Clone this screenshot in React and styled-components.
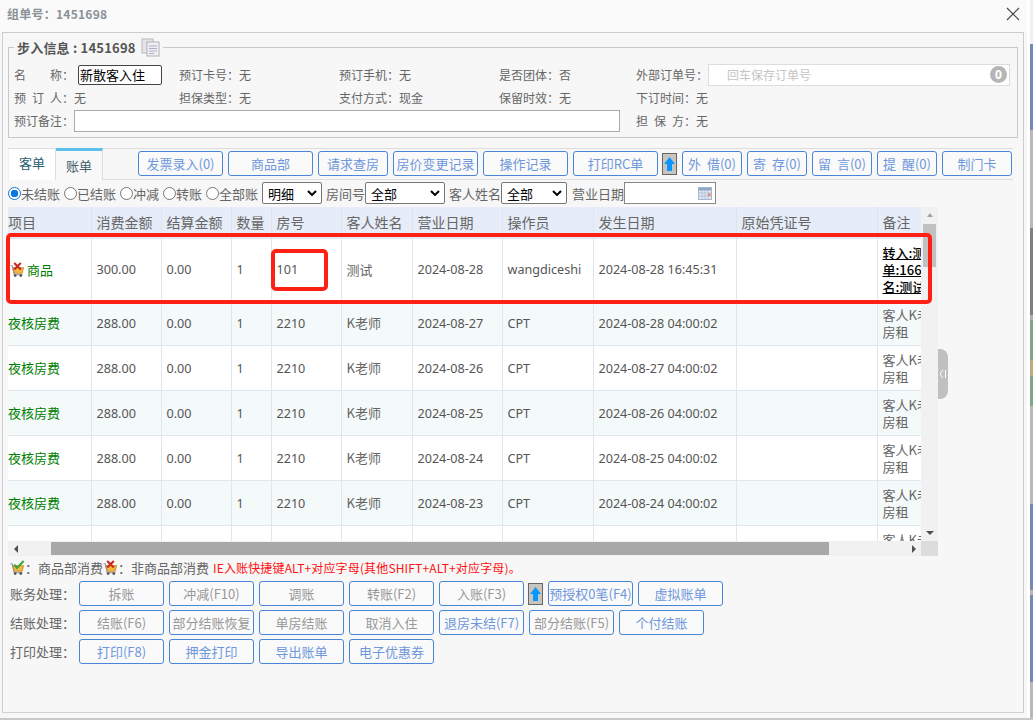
import React from 'react';
import styled, { createGlobalStyle } from 'styled-components';

const CJK = `"Noto Sans CJK SC", "Noto Sans", sans-serif`;

const Global = createGlobalStyle`
    html, body { margin: 0; padding: 0; background: #f7f7f7; }
    * { box-sizing: border-box; }
`

const Page = styled.div`
    position: relative;
    width: 1033px;
    height: 720px;
    overflow: hidden;
    background: #f7f7f7;
    font-family: ${CJK};
    color: #666;
`

const TitleBar = styled.div`
    display: flex;
    align-items: center;
    justify-content: space-between;
    height: 32px;
    padding: 0 13px 5px 7px;
    background: #fafafa;
`

const Title = styled.div`
    font-size: 12px;
    font-weight: 700;
    letter-spacing: .25px;
    color: #8a9196;
`

const CloseBtn = styled.button`
    display: flex;
    padding: 0;
    border: 0;
    background: none;
`

const Frame = styled.div`
    width: 1022px;
    height: 681px;
    margin-left: 2px;
    padding: 0 5px;
    border: 1px solid #ccc;
    border-bottom-color: #d0d0d0;
`

const Info = styled.fieldset`
    width: 1010px;
    height: 99px;
    margin: 6px 0 0;
    padding: 0 5px;
    border: 1px solid #c8c8c8;
    min-inline-size: 0;
`

const InfoLegend = styled.legend`
    display: flex;
    align-items: center;
    gap: 5px;
    padding: 0 3px;
    height: 16px;
    font-size: 13px;
    font-weight: 700;
    letter-spacing: .2px;
    color: #555;
`

const InfoRows = styled.div`
    padding-top: 8px;
`

const InfoRow = styled.div`
    display: grid;
    grid-template-columns: 165px 160px 160px 137px 1fr;
    align-items: center;
    height: 23px;
    font-size: 12px;
    color: #666;
`

const InfoCell = styled.div`
    display: flex;
    align-items: center;
    white-space: nowrap;
    grid-column: ${p => p.$span ? `span ${p.$span}` : 'auto'};
`

const Spaced = styled.span`
    display: inline-block;
    width: ${p => p.$w}px;
    text-align-last: justify;
`

const NameInput = styled.input`
    width: 84px;
    height: 20px;
    margin-left: 4px;
    padding: 0 1px;
    border: 1px solid #444;
    border-radius: 2px;
    background: #fff;
    font: 13px ${CJK};
    color: #000;
`

const RemarkInput = styled.input`
    width: 546px;
    height: 22px;
    border: 1px solid #aaa;
    background: #fff;
`

const OrderBox = styled.div`
    display: flex;
    align-items: center;
    justify-content: space-between;
    width: 302px;
    height: 22px;
    padding: 0 2px 0 18px;
    border: 1px solid #ddd;
    background: #fff;
    font-size: 12px;
    color: #c4c4c4;
`

const Zero = styled.span`
    width: 17px;
    height: 17px;
    border-radius: 50%;
    background: #b5b5b5;
    color: #fff;
    font: 700 12px/17px "Noto Sans", sans-serif;
    text-align: center;
`

const TabBar = styled.div`
    display: flex;
    align-items: flex-start;
    width: 1005px;
    height: 31px;
    margin-top: 10px;
    border-top: 1px solid #ddd;
`

const Tab = styled.div`
    width: ${p => p.$active ? 47 : 48}px;
    height: ${p => p.$active ? 32 : 31}px;
    border-left: ${p => p.$active ? 0 : '1px solid #eee'};
    border-right: 1px solid #ddd;
    border-top: ${p => p.$active ? '3px solid #5bc0eb' : '0'};
    margin-top: ${p => p.$active ? '-1px' : '0'};
    background: ${p => p.$active ? '#f8f8f8' : '#fff'};
    font-size: 13px;
    line-height: ${p => p.$active ? '30px' : '28px'};
    text-align: center;
    color: ${p => p.$active ? '#44606b' : '#27606f'};
`

const TabTools = styled.div`
    display: flex;
    gap: 5px;
    margin: 2px 0 0 35px;
    align-items: center;
`

const ToolBtn = styled.button`
    flex: none;
    width: ${p => p.$w || 85}px;
    height: 25px;
    padding: 0;
    border: 1px solid #4a86d8;
    border-radius: 3px;
    background: #fafafa;
    font: 13px/23px ${CJK};
    white-space: nowrap;
    color: ${p => p.$off ? '#989898' : '#6e97dc'};
`

const ArrowBtn = styled.span`
    display: flex;
    flex: none;
    align-items: center;
    justify-content: center;
    width: 15px;
    height: 22px;
    margin-left: -1px;
    border: 1px solid #666;
    background: #c8c5bf;
`

const Divider = styled.div`
    width: 1005px;
    border-top: 1px solid #ddd;
`

const Filters = styled.div`
    display: flex;
    align-items: center;
    height: 22px;
    margin-top: 2px;
    font-size: 13px;
    color: #666;
    white-space: nowrap;
`

const RadioLabel = styled.label`
    display: flex;
    align-items: center;
    margin-right: 4px;
`

const Radio = styled.span`
    width: 13px;
    height: 13px;
    border-radius: 50%;
    border: 1px solid ${p => p.$on ? '#0b75e0' : '#767676'};
    background: ${p => p.$on ? 'radial-gradient(circle, #0b75e0 0 3.5px, #fff 4px)' : '#fff'};
`

const SelectBox = styled.span`
    display: flex;
    align-items: center;
    justify-content: space-between;
    flex: none;
    width: ${p => p.$w}px;
    height: 22px;
    margin-right: ${p => p.$mr || 0}px;
    padding: 0 4px 0 5px;
    border: 1px solid #767676;
    border-radius: 2px;
    background: #fff;
    color: #000;
`

const DateBox = styled.span`
    display: flex;
    align-items: center;
    justify-content: flex-end;
    width: 92px;
    height: 22px;
    padding-right: 3px;
    border: 1px solid #888;
    background: #fff;
`

const Grid = styled.div`
    display: grid;
    grid-template-columns: 913px 17px;
    grid-template-rows: 334px 15px;
    width: 930px;
    margin-top: 3px;
`

const Viewport = styled.div`
    overflow: hidden;
    background: #fff;
`

const Table = styled.table`
    width: 969px;
    table-layout: fixed;
    border-collapse: collapse;
    font-size: 13px;
    color: #666;
`

const Th = styled.th`
    height: 31px;
    padding: 0 0 0 ${p => p.$pl ?? 5}px;
    border: 1px solid #dfe4ef;
    border-top: 0;
    background: #e6ecf8;
    font-size: 14px;
    font-weight: 400;
    text-align: left;
    white-space: nowrap;
    overflow: hidden;
    &:first-child { border-left: 0; }
`

const Tr = styled.tr`
    height: ${p => p.$h}px;
    background: ${p => p.$alt ? '#f4f9f9' : '#fff'};
`

const Td = styled.td`
    padding: 0 0 0 5px;
    border: 1px solid #e0e5ee;
    white-space: nowrap;
    overflow: hidden;
`

const Num = styled(Td)`
    padding-top: 1px;
    font: 12.6px "Noto Sans", sans-serif;
    color: #555;
`

const ItemTd = styled(Td)`
    padding-left: 0;
    border-left: 0;
    color: #008000;
`

const ItemInner = styled.span`
    display: flex;
    align-items: center;
    gap: 2px;
    padding-left: 2px;
`

const Note = styled(Td)`
    line-height: 17px;
`

const NoteLink = styled(Note)`
    font-weight: 500;
    color: #000;
    text-decoration: underline;
`

const VBar = styled.div`
    display: flex;
    flex-direction: column;
    align-items: center;
    padding: 0 2px;
    background: #f1f1f1;
`

const VThumb = styled.div`
    width: 13px;
    height: 43px;
    margin-top: 7px;
    background: #c1c1c1;
`

const TriUp = styled.div`
    margin-top: 6px;
    border: 3.5px solid transparent;
    border-top: 0;
    border-bottom: 4px solid #a3a3a3;
`

const TriDown = styled.div`
    margin-top: auto;
    margin-bottom: 6px;
    border: 4px solid transparent;
    border-bottom: 0;
    border-top: 4px solid #505050;
`

const HBar = styled.div`
    display: flex;
    align-items: center;
    padding-left: 6px;
    background: #f1f1f1;
`

const HThumb = styled.div`
    width: 778px;
    height: 13px;
    margin-left: 33px;
    background: #a8a8a8;
`

const TriLeft = styled.div`
    border: 4px solid transparent;
    border-left: 0;
    border-right: 4px solid #505050;
`

const TriRight = styled.div`
    margin-left: auto;
    margin-right: 5px;
    border: 4px solid transparent;
    border-right: 0;
    border-left: 4px solid #505050;
`

const Corner = styled.div`
    background: #dcdcdc;
`

const Handle = styled.div`
    position: absolute;
    left: 938px;
    top: 349px;
    width: 10px;
    height: 50px;
    display: flex;
    align-items: center;
    justify-content: center;
    border-radius: 0 8px 8px 0;
    background: #c0c0c0;
`

const RedBox = styled.div`
    position: absolute;
    left: ${p => p.$x}px;
    top: ${p => p.$y}px;
    width: ${p => p.$w}px;
    height: ${p => p.$h}px;
    border: 4px solid #ff2015;
    border-radius: 5px;
    pointer-events: none;
`

const LegendLine = styled.div`
    display: flex;
    align-items: center;
    height: 22px;
    padding-left: 2px;
    font-size: 13px;
    color: #666;
    white-space: nowrap;
`

const Hint = styled.span`
    margin-left: 4px;
    font-size: 12px;
    letter-spacing: .15px;
    color: #ff1010;
`

const Actions = styled.div`
    display: flex;
    flex-direction: column;
    gap: 4px;
    margin-top: 3px;
`

const ActionRow = styled.div`
    display: flex;
    align-items: center;
    gap: 5px;
    height: 25px;
`

const ActionLabel = styled.span`
    flex: none;
    width: 66px;
    padding-left: 2px;
    font-size: 13px;
    white-space: nowrap;
    color: #666;
`

const SideStrip = styled.div`
    position: absolute;
    right: 0;
    top: 0;
    width: 3px;
    height: 720px;
    background: linear-gradient(
        #f0f0f0 0 44px, #7688b4 44px 130px, #b8b8b8 130px 228px, #808080 228px 315px,
        #b0b0b0 315px 320px, #7fa58c 320px 360px, #c2a67e 360px 376px, #7fa58c 376px 406px,
        #b8b8b8 406px 504px, #7688b4 504px 590px, #b8b8b8 590px 595px, #7688b4 595px 682px, #b8b8b8 682px 720px
    );
`

const WhiteStrip = styled.div`
    position: absolute;
    right: 3px;
    top: 0;
    width: 3px;
    height: 720px;
    background: #fff;
`

const BottomStrip = styled.div`
    position: absolute;
    left: 0;
    bottom: 0;
    width: 100%;
    height: 2px;
    background: #c9c9c9;
`

const Cart = ({ ok }) => (
    <svg width="15" height="15" viewBox="1 0 15 16">
        <path d="M3 6h12l-1.500 6H5z" fill="#f6b53c" stroke="#b9802a" strokeWidth=".8" />
        <path d="M1 4h2l1.800 9.500h9" fill="none" stroke="#8d8d8d" strokeWidth="1" />
        <circle cx="6" cy="14.500" r="1.500" fill="#555" />
        <circle cx="12" cy="14.500" r="1.500" fill="#555" />
        {ok
            ? <path d="M5 5l3 3.500L15 1" fill="none" stroke="#3aa53a" strokeWidth="2.200" />
            : <path d="M5 1l7 7M12 1L5 8" fill="none" stroke="#c8281e" strokeWidth="2.200" />}
    </svg>
);

const UpArrow = () => (
    <svg width="11" height="16" viewBox="0 0 11 16">
        <path d="M5.500 1L11 8H8v7H3V8H0z" fill="#0a96ff" />
    </svg>
);

const Chevron = () => (
    <svg width="10" height="6" viewBox="0 0 10 6">
        <path d="M1 1l4 4 4-4" fill="none" stroke="#000" strokeWidth="2" />
    </svg>
);

const CopyIcon = () => (
    <svg width="19" height="19" viewBox="0 0 19 19">
        <rect x="1" y="1" width="11" height="14" fill="#e4e4e4" stroke="#b8b8b8" />
        <rect x="6" y="4" width="12" height="14" fill="#f0f0f4" stroke="#b0b0b8" />
        <path d="M8 8h8M8 10.500h8M8 13h8M8 15.500h5" stroke="#a9aec4" />
    </svg>
);

const CalIcon = () => (
    <svg width="14" height="13" viewBox="0 0 14 13">
        <rect x=".5" y=".5" width="13" height="12" fill="#dfe6f2" stroke="#a9b6cc" />
        <rect x="1" y="1" width="12" height="2.500" fill="#8fa6c8" />
        <path d="M1 6h12M1 9h12M4 3v9M7 3v9M10 3v9" stroke="#b7c3d8" />
        <rect x="10" y="6.500" width="2.500" height="2.500" fill="#e8896a" />
    </svg>
);

const columns = [
    ['项目', 83, 0], ['消费金额', 70], ['结算金额', 70], ['数量', 40], ['房号', 70], ['客人姓名', 71],
    ['营业日期', 90], ['操作员', 91], ['发生日期', 143], ['原始凭证号', 141], ['备注', 100],
];

const rows = [
    ['2024-08-27', '2024-08-28 04:00:02'],
    ['2024-08-26', '2024-08-27 04:00:02'],
    ['2024-08-25', '2024-08-26 04:00:02'],
    ['2024-08-24', '2024-08-25 04:00:02'],
    ['2024-08-23', '2024-08-24 04:00:02'],
];

const App = () => {
    return (
        <Page>
            <Global />
            <TitleBar>
                <Title>组单号：1451698</Title>
                <CloseBtn>
                    <svg width="14" height="14" viewBox="0 0 14 14">
                        <path d="M1 1l12 12M13 1L1 13" stroke="#444" strokeWidth="1.1" />
                    </svg>
                </CloseBtn>
            </TitleBar>
            <Frame>
                <Info>
                    <InfoLegend>步入信息 : 1451698 <CopyIcon /></InfoLegend>
                    <InfoRows>
                        <InfoRow>
                            <InfoCell><Spaced $w={48}>名称</Spaced>：<NameInput defaultValue="新散客入住" /></InfoCell>
                            <InfoCell>预订卡号：无</InfoCell>
                            <InfoCell>预订手机：无</InfoCell>
                            <InfoCell>是否团体：否</InfoCell>
                            <InfoCell>外部订单号：<OrderBox>回车保存订单号<Zero>0</Zero></OrderBox></InfoCell>
                        </InfoRow>
                        <InfoRow>
                            <InfoCell><Spaced $w={48}>预订人</Spaced>：无</InfoCell>
                            <InfoCell>担保类型：无</InfoCell>
                            <InfoCell>支付方式：现金</InfoCell>
                            <InfoCell>保留时效：无</InfoCell>
                            <InfoCell>下订时间：无</InfoCell>
                        </InfoRow>
                        <InfoRow>
                            <InfoCell $span={4}>预订备注：<RemarkInput /></InfoCell>
                            <InfoCell><Spaced $w={48}>担保方</Spaced>：无</InfoCell>
                        </InfoRow>
                    </InfoRows>
                </Info>
                <TabBar>
                    <Tab>客单</Tab>
                    <Tab $active>账单</Tab>
                    <TabTools>
                        <ToolBtn>发票录入(0)</ToolBtn>
                        <ToolBtn>商品部</ToolBtn>
                        <ToolBtn $w={70}>请求查房</ToolBtn>
                        <ToolBtn>房价变更记录</ToolBtn>
                        <ToolBtn>操作记录</ToolBtn>
                        <ToolBtn>打印RC单</ToolBtn>
                        <ArrowBtn><UpArrow /></ArrowBtn>
                        <ToolBtn $w={60}>外&nbsp;&nbsp;借(0)</ToolBtn>
                        <ToolBtn $w={60}>寄&nbsp;&nbsp;存(0)</ToolBtn>
                        <ToolBtn $w={60}>留&nbsp;&nbsp;言(0)</ToolBtn>
                        <ToolBtn $w={60}>提&nbsp;&nbsp;醒(0)</ToolBtn>
                        <ToolBtn $w={70}>制门卡</ToolBtn>
                    </TabTools>
                </TabBar>
                <Divider />
                <Filters>
                    <RadioLabel><Radio $on />未结账</RadioLabel>
                    <RadioLabel><Radio />已结账</RadioLabel>
                    <RadioLabel><Radio />冲减</RadioLabel>
                    <RadioLabel><Radio />转账</RadioLabel>
                    <RadioLabel><Radio />全部账</RadioLabel>
                    <SelectBox $w={60} $mr={4}>明细<Chevron /></SelectBox>
                    房间号
                    <SelectBox $w={80} $mr={4}>全部<Chevron /></SelectBox>
                    客人姓名
                    <SelectBox $w={66} $mr={5}>全部<Chevron /></SelectBox>
                    营业日期
                    <DateBox><CalIcon /></DateBox>
                </Filters>
                <Grid>
                    <Viewport>
                        <Table>
                            <colgroup>
                                {columns.map(c => <col key={c[0]} style={{ width: c[1] }} />)}
                            </colgroup>
                            <thead>
                                <tr>
                                    {columns.map(c => <Th key={c[0]} $pl={c[2]}>{c[0]}</Th>)}
                                </tr>
                            </thead>
                            <tbody>
                                <Tr $h={62}>
                                    <ItemTd><ItemInner><Cart />商品</ItemInner></ItemTd>
                                    <Num>300.00</Num>
                                    <Num>0.00</Num>
                                    <Num>1</Num>
                                    <Num>101</Num>
                                    <Td>测试</Td>
                                    <Num>2024-08-28</Num>
                                    <Num>wangdiceshi</Num>
                                    <Num>2024-08-28 16:45:31</Num>
                                    <Td />
                                    <NoteLink>转入:测试<br />单:16688<br />名:测试</NoteLink>
                                </Tr>
                                {rows.map((r, i) => (
                                    <Tr key={r[0]} $h={45} $alt={i % 2 === 0}>
                                        <ItemTd>夜核房费</ItemTd>
                                        <Num>288.00</Num>
                                        <Num>0.00</Num>
                                        <Num>1</Num>
                                        <Num>2210</Num>
                                        <Td>K老师</Td>
                                        <Num>{r[0]}</Num>
                                        <Num>CPT</Num>
                                        <Num>{r[1]}</Num>
                                        <Td />
                                        <Note>客人K老师<br />房租</Note>
                                    </Tr>
                                ))}
                                <Tr $h={45}>
                                    <ItemTd />
                                    <Td /><Td /><Td /><Td /><Td /><Td /><Td /><Td /><Td />
                                    <Note>客人K老师<br />房租</Note>
                                </Tr>
                            </tbody>
                        </Table>
                    </Viewport>
                    <VBar>
                        <TriUp />
                        <VThumb />
                        <TriDown />
                    </VBar>
                    <HBar>
                        <TriLeft />
                        <HThumb />
                        <TriRight />
                    </HBar>
                    <Corner />
                </Grid>
                <LegendLine>
                    <Cart ok />：商品部消费<Cart />：非商品部消费
                    <Hint>IE入账快捷键ALT+对应字母(其他SHIFT+ALT+对应字母)。</Hint>
                </LegendLine>
                <Actions>
                    <ActionRow>
                        <ActionLabel>账务处理：</ActionLabel>
                        <ToolBtn $off>拆账</ToolBtn>
                        <ToolBtn $off>冲减(F10)</ToolBtn>
                        <ToolBtn $off>调账</ToolBtn>
                        <ToolBtn $off>转账(F2)</ToolBtn>
                        <ToolBtn $off>入账(F3)</ToolBtn>
                        <ArrowBtn><UpArrow /></ArrowBtn>
                        <ToolBtn>预授权0笔(F4)</ToolBtn>
                        <ToolBtn>虚拟账单</ToolBtn>
                    </ActionRow>
                    <ActionRow>
                        <ActionLabel>结账处理：</ActionLabel>
                        <ToolBtn $off>结账(F6)</ToolBtn>
                        <ToolBtn $off>部分结账恢复</ToolBtn>
                        <ToolBtn $off>单房结账</ToolBtn>
                        <ToolBtn $off>取消入住</ToolBtn>
                        <ToolBtn>退房未结(F7)</ToolBtn>
                        <ToolBtn $off>部分结账(F5)</ToolBtn>
                        <ToolBtn>个付结账</ToolBtn>
                    </ActionRow>
                    <ActionRow>
                        <ActionLabel>打印处理：</ActionLabel>
                        <ToolBtn>打印(F8)</ToolBtn>
                        <ToolBtn>押金打印</ToolBtn>
                        <ToolBtn>导出账单</ToolBtn>
                        <ToolBtn>电子优惠券</ToolBtn>
                    </ActionRow>
                </Actions>
            </Frame>
            <RedBox $x={6} $y={233} $w={926} $h={71} />
            <RedBox $x={271} $y={249} $w={57} $h={42} />
            <Handle>
                <svg width="8" height="10" viewBox="0 0 8 10">
                    <path d="M4 1L1 5l3 4M6.500 1v8" fill="none" stroke="#fff" strokeWidth="1" />
                </svg>
            </Handle>
            <WhiteStrip />
            <SideStrip />
            <BottomStrip />
        </Page>
    );
}

export default App;
